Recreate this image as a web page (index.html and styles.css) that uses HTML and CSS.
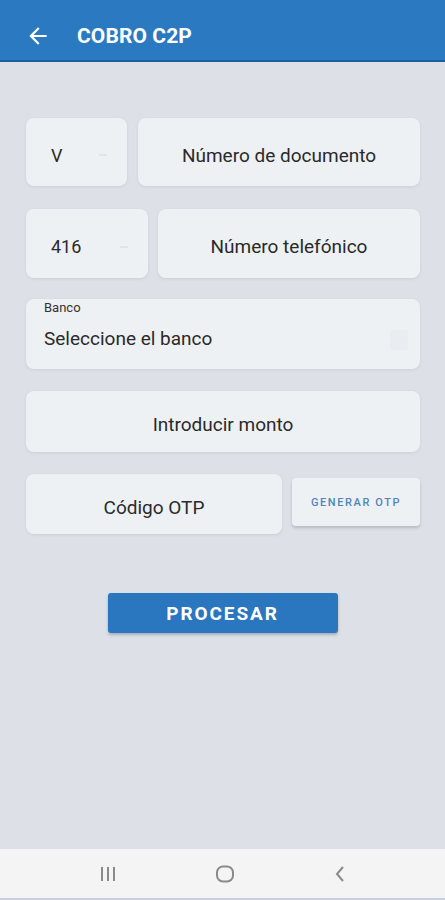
FILE: index.html
```html
<!DOCTYPE html>
<html lang="es">
<head>
<meta charset="utf-8">
<title>Cobro C2P</title>
<link rel="stylesheet" href="styles.css">
</head>
<body>
<div class="screen">
  <header class="appbar">
    <svg class="back" width="26" height="26" viewBox="0 0 24 24"><path d="M20 11H7.83l5.59-5.59L12 4l-8 8 8 8 1.41-1.41L7.83 13H20v-2z" fill="#fff"/></svg>
    <h1 class="title">COBRO C2P</h1>
  </header>
  <main class="content">
    <div class="row row-doc">
      <div class="field sel sel-doc"><span class="val">V</span><span class="caret"></span></div>
      <div class="field center">Número de documento</div>
    </div>
    <div class="row row-tel">
      <div class="field sel sel-tel"><span class="val">416</span><span class="caret"></span></div>
      <div class="field center">Número telefónico</div>
    </div>
    <div class="field bank">
      <span class="label">Banco</span>
      <span class="bank-val">Seleccione el banco</span>
      <span class="bank-icon"></span>
    </div>
    <div class="field center monto">Introducir monto</div>
    <div class="row row-otp">
      <div class="field center otp">Código OTP</div>
      <button class="gen">GENERAR OTP</button>
    </div>
    <button class="procesar">PROCESAR</button>
  </main>
  <nav class="navbar">
    <svg width="18" height="18" viewBox="0 0 18 18"><path d="M3 2v14M9 2v14M15 2v14" stroke="#8a8a8a" stroke-width="2"/></svg>
    <svg width="20" height="20" viewBox="0 0 20 20"><rect x="2" y="2.5" width="16" height="15" rx="6" fill="none" stroke="#8a8a8a" stroke-width="2"/></svg>
    <svg width="14" height="18" viewBox="0 0 14 18"><path d="M10 2L4 9l6 7" fill="none" stroke="#8a8a8a" stroke-width="2"/></svg>
  </nav>
</div>
</body>
</html>
```
FILE: styles.css
```css
* { box-sizing: border-box; }
html, body { margin: 0; padding: 0; }
body {
  font-family: Roboto, "Noto Sans", Arial, sans-serif;
  background: #dde1e7;
}
.screen {
  width: 445px;
  height: 900px;
  display: flex;
  flex-direction: column;
  overflow: hidden;
}
.appbar {
  height: 62px;
  flex: none;
  background: #2a79c1;
  border-bottom: 2px solid #1b5f9f;
  display: flex;
  align-items: center;
  padding: 12px 0 0 25px;
}
.back { margin-right: 26px; }
.title {
  margin: 0;
  color: #fff;
  font-size: 21px;
  font-weight: 700;
  letter-spacing: 0.1px;
}
.content {
  flex: 1;
  display: flex;
  flex-direction: column;
  padding: 56px 25px 0 26px;
}
.row { display: flex; gap: 11px; }
.field {
  background: #eef1f4;
  border-radius: 8px;
  box-shadow: 0 1px 3px rgba(120, 130, 145, 0.18);
  color: #2a2a2a;
  font-size: 19px;
}
.center {
  flex: 1;
  display: flex;
  align-items: center;
  justify-content: center;
  padding-top: 6px;
}
.row-doc { height: 68px; }
.row-tel { height: 69px; margin-top: 23px; gap: 10px; }
.sel {
  flex: none;
  display: flex;
  align-items: center;
  justify-content: space-between;
  padding: 6px 20px 0 25px;
  font-size: 18px;
}
.sel-doc { width: 101px; }
.sel-tel { width: 122px; }
.caret {
  width: 8px;
  height: 2px;
  background: #e1e4e9;
}
.bank {
  margin-top: 21px;
  height: 70px;
  position: relative;
  display: flex;
  flex-direction: column;
  padding: 1px 18px 0 18px;
}
.label {
  font-size: 13px;
  color: #333;
  line-height: 16px;
}
.bank-val {
  margin-top: 12px;
  font-size: 19px;
  line-height: 22px;
}
.bank-icon {
  position: absolute;
  right: 12px;
  top: 31px;
  width: 18px;
  height: 20px;
  border-radius: 3px;
  background: #e9ecf0;
}
.monto { flex: none; height: 61px; margin-top: 22px; }
.row-otp { height: 60px; margin-top: 22px; gap: 10px; align-items: center; }
.otp { height: 60px; }
.gen {
  flex: none;
  width: 128px;
  height: 48px;
  border: none;
  border-radius: 4px;
  background: #eef1f4;
  box-shadow: 0 2px 3px rgba(90, 100, 115, 0.3);
  color: #4f86b7;
  font-family: Roboto, Arial, sans-serif;
  font-size: 11px;
  font-weight: 500;
  letter-spacing: 1.6px;
  padding: 0;
  margin-top: -4px;
}
.procesar {
  align-self: center;
  margin: 59px 0 0 -1px;
  width: 230px;
  height: 40px;
  border: none;
  border-radius: 3px;
  background: #2a76bf;
  box-shadow: 0 2px 3px rgba(40, 60, 90, 0.3);
  color: #fff;
  font-family: Roboto, Arial, sans-serif;
  font-size: 19px;
  font-weight: 700;
  letter-spacing: 1.9px;
  padding: 0;
}
.navbar {
  height: 51px;
  flex: none;
  background: #f4f4f4;
  border-bottom: 2px solid #c8d2de;
  display: flex;
  align-items: center;
  justify-content: space-between;
  padding: 0 98px 0 99px;
}
```
